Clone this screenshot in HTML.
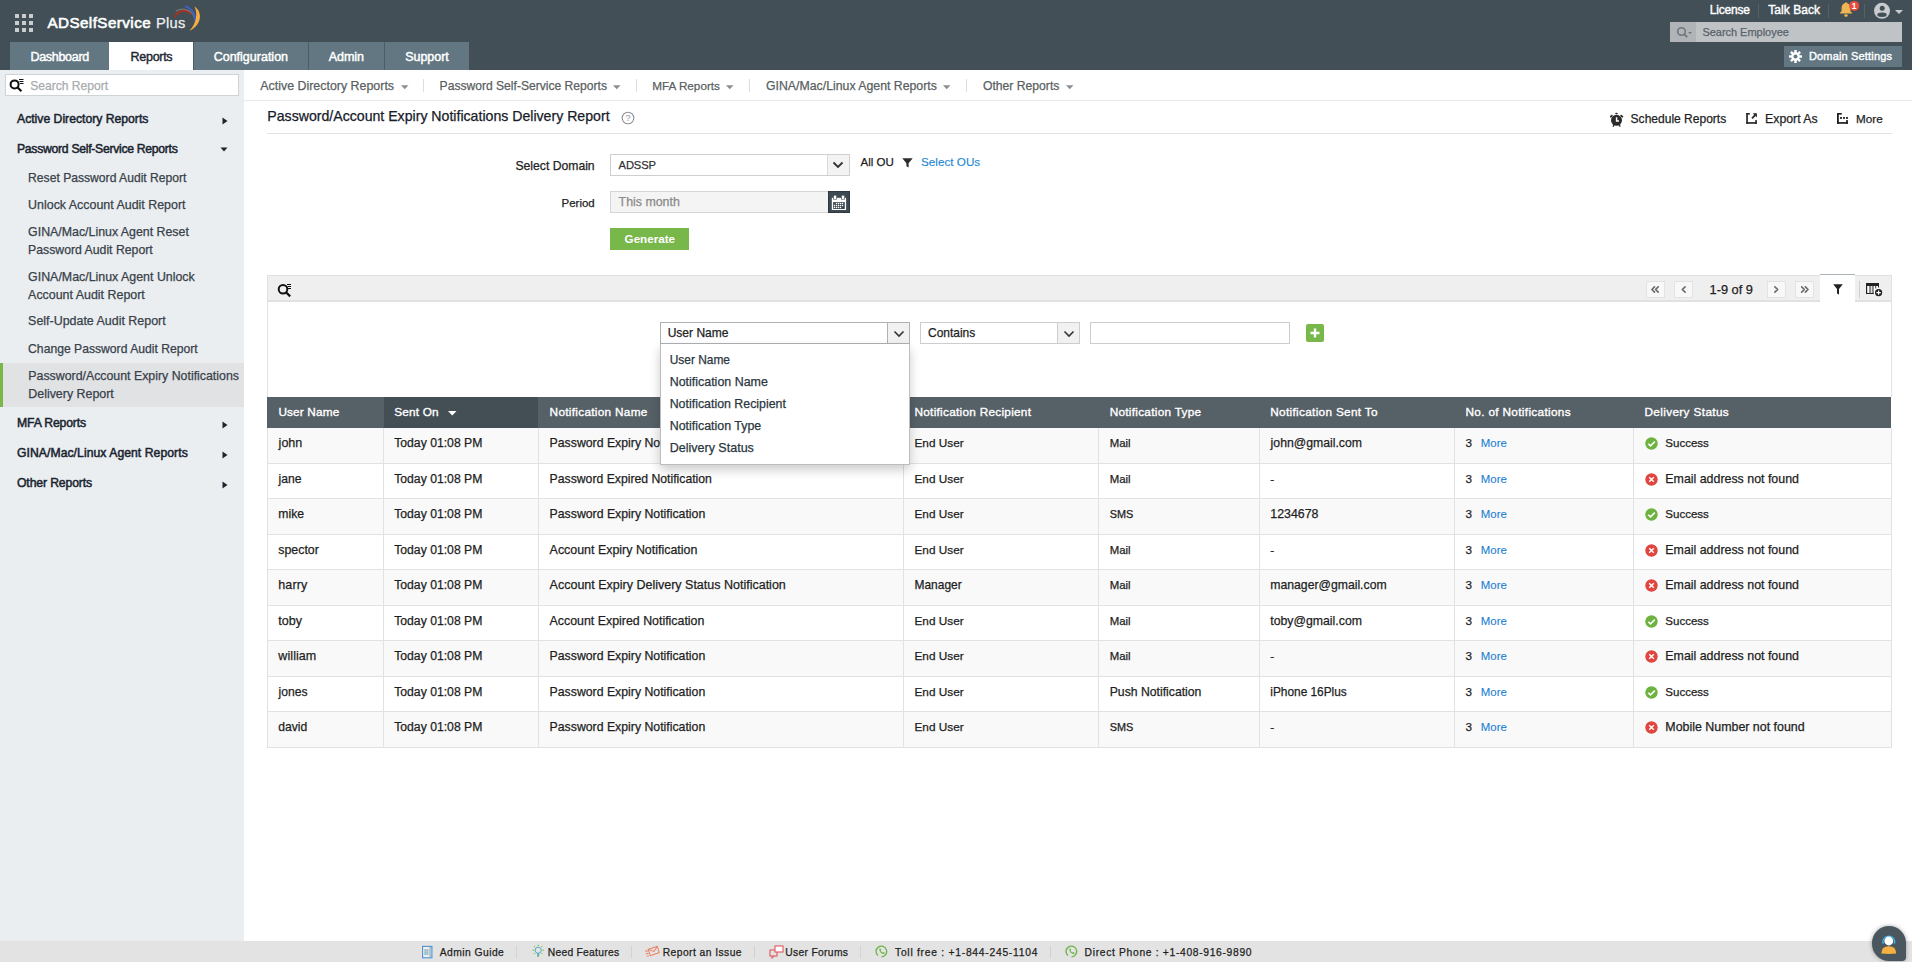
<!DOCTYPE html>
<html><head><meta charset="utf-8"><title>ADSelfService Plus</title>
<style>
html,body{margin:0;padding:0;}
body{width:1912px;height:962px;overflow:hidden;position:relative;background:#fff;font-family:"Liberation Sans",sans-serif;}
.t{position:absolute;white-space:nowrap;-webkit-text-stroke:0.25px currentColor;}
.t.b{-webkit-text-stroke:0;}
.r{position:absolute;}
</style></head><body>
<div class="r" style="left:0px;top:0px;width:1912px;height:70px;background:#424f57;"></div>
<div class="r" style="left:15px;top:14px;width:4px;height:4px;background:#c9cdd0;"></div>
<div class="r" style="left:15px;top:21px;width:4px;height:4px;background:#c9cdd0;"></div>
<div class="r" style="left:15px;top:28px;width:4px;height:4px;background:#c9cdd0;"></div>
<div class="r" style="left:22px;top:14px;width:4px;height:4px;background:#c9cdd0;"></div>
<div class="r" style="left:22px;top:21px;width:4px;height:4px;background:#c9cdd0;"></div>
<div class="r" style="left:22px;top:28px;width:4px;height:4px;background:#c9cdd0;"></div>
<div class="r" style="left:29px;top:14px;width:4px;height:4px;background:#c9cdd0;"></div>
<div class="r" style="left:29px;top:21px;width:4px;height:4px;background:#c9cdd0;"></div>
<div class="r" style="left:29px;top:28px;width:4px;height:4px;background:#c9cdd0;"></div>
<div class="t" style="left:47.40px;top:15.01px;font-size:15.20px;line-height:15.20px;color:#ffffff;letter-spacing:0.445px;-webkit-text-stroke:0.6px #fff;">ADSelfService</div>
<div class="t" style="left:155.90px;top:16.02px;font-size:14.60px;line-height:14.60px;color:#f0f0f0;letter-spacing:0.334px;">Plus</div>
<svg class="r" style="left:168px;top:0px" width="40" height="36" viewBox="0 0 40 36"><path d="M6.8 17.5 A9.6 9.6 0 0 1 23.2 14.2" stroke="#a8321e" stroke-width="2" fill="none"/><path d="M8 11.2 A12.5 12.5 0 0 1 26.6 17.8" stroke="#70777a" stroke-width="1.2" fill="none"/><path d="M17.2 6.2 A14.5 14.5 0 0 1 27.2 21.5" stroke="#3b62c9" stroke-width="1.9" fill="none"/><path d="M26.4 6.4 C34.6 11.5 34.4 24.5 21.4 30.8 C28.8 23.5 29.8 12.5 26.4 6.4 Z" fill="#f7ae3e"/></svg>
<div class="r" style="left:10px;top:42px;width:99px;height:28px;background:#627782;"></div>
<div class="t" style="left:30.50px;top:51.01px;font-size:12.50px;line-height:12.50px;color:#ffffff;letter-spacing:-0.303px;-webkit-text-stroke:0.45px #fff;">Dashboard</div>
<div class="r" style="left:109px;top:42px;width:84px;height:28px;background:#ffffff;"></div>
<div class="t" style="left:130.60px;top:51.01px;font-size:12.50px;line-height:12.50px;color:#1b2631;letter-spacing:-0.292px;-webkit-text-stroke:0.4px #1b2631;">Reports</div>
<div class="r" style="left:194px;top:42px;width:114px;height:28px;background:#627782;"></div>
<div class="t" style="left:213.70px;top:51.01px;font-size:12.50px;line-height:12.50px;color:#ffffff;-webkit-text-stroke:0.45px #fff;">Configuration</div>
<div class="r" style="left:309px;top:42px;width:75px;height:28px;background:#627782;"></div>
<div class="t" style="left:328.80px;top:51.01px;font-size:12.50px;line-height:12.50px;color:#ffffff;letter-spacing:-0.084px;-webkit-text-stroke:0.45px #fff;">Admin</div>
<div class="r" style="left:385px;top:42px;width:84px;height:28px;background:#627782;"></div>
<div class="t" style="left:405.20px;top:51.01px;font-size:12.50px;line-height:12.50px;color:#ffffff;letter-spacing:-0.035px;-webkit-text-stroke:0.45px #fff;">Support</div>
<div class="r" style="left:193px;top:42px;width:1px;height:28px;background:#4d5c65;"></div>
<div class="r" style="left:308px;top:42px;width:1px;height:28px;background:#4d5c65;"></div>
<div class="r" style="left:384px;top:42px;width:1px;height:28px;background:#4d5c65;"></div>
<div class="t" style="left:1709.70px;top:4.01px;font-size:12.00px;line-height:12.00px;color:#ffffff;letter-spacing:-0.173px;-webkit-text-stroke:0.4px #fff;">License</div>
<div class="r" style="left:1758px;top:4px;width:1px;height:14px;background:#55626a;"></div>
<div class="t" style="left:1768.30px;top:4.01px;font-size:12.00px;line-height:12.00px;color:#ffffff;letter-spacing:0.047px;-webkit-text-stroke:0.4px #fff;">Talk Back</div>
<div class="r" style="left:1828px;top:4px;width:1px;height:14px;background:#55626a;"></div>
<svg class="r" style="left:1838px;top:1px" width="16" height="17" viewBox="0 0 16 17"><path d="M8 1.2c-0.6 0-1 0.4-1 0.8C4.9 2.6 3.6 4.5 3.6 6.8v3.3L1.6 12.6h12.8l-2-2.5V6.8C12.4 4.5 11.1 2.6 9 2c0-0.4-0.4-0.8-1-0.8z" fill="#efb552"/><rect x="6.3" y="13.3" width="3.4" height="2.4" rx="1.2" fill="#efb552"/></svg>
<svg class="r" style="left:1847px;top:0px" width="14" height="12" viewBox="0 0 14 12"><circle cx="7.2" cy="5.9" r="5" fill="#e84c3d"/><text x="7.2" y="9.1" font-family="Liberation Sans" font-weight="bold" font-size="8.5" fill="#fff" text-anchor="middle">1</text></svg>
<div class="r" style="left:1864px;top:4px;width:1px;height:14px;background:#55626a;"></div>
<svg class="r" style="left:1873px;top:2px" width="18" height="18" viewBox="0 0 18 18"><circle cx="9" cy="8.85" r="8" fill="#c8ccce"/><circle cx="9.2" cy="6.2" r="2.5" fill="#424f57"/><ellipse cx="9" cy="12.7" rx="4.7" ry="2.2" fill="#424f57"/></svg>
<svg class="r" style="left:1895px;top:10px" width="8" height="4" viewBox="0 0 8 4"><path d="M0 0h8L4 4z" fill="#c8ccce"/></svg>
<div class="r" style="left:1670px;top:22px;width:232px;height:20px;background:#bfc3c6;"></div>
<div class="r" style="left:1670px;top:22px;width:26px;height:20px;background:#b0b4b7;"></div>
<svg class="r" style="left:1676px;top:26px" width="16" height="13" viewBox="0 0 16 13"><circle cx="5.5" cy="5.5" r="3.8" fill="none" stroke="#6e767c" stroke-width="1.6"/><path d="M8.2 8.2l3 3" stroke="#6e767c" stroke-width="1.8"/><path d="M12 6h4l-2 2z" fill="#6e767c"/></svg>
<div class="t" style="left:1702.40px;top:27.00px;font-size:11.00px;line-height:11.00px;color:#58626a;letter-spacing:-0.025px;">Search Employee</div>
<div class="r" style="left:1784px;top:46px;width:118px;height:21px;background:#627782;"></div>
<svg class="r" style="left:1789px;top:50px" width="13" height="13" viewBox="0 0 13 13"><g fill="#fff"><circle cx="6.5" cy="6.5" r="4.2"/><rect x="5.3" y="0" width="2.4" height="13"/><rect x="0" y="5.3" width="13" height="2.4"/><rect x="5.3" y="0" width="2.4" height="13" transform="rotate(45 6.5 6.5)"/><rect x="5.3" y="0" width="2.4" height="13" transform="rotate(-45 6.5 6.5)"/></g><circle cx="6.5" cy="6.5" r="2" fill="#627782"/></svg>
<div class="t" style="left:1808.90px;top:51.00px;font-size:11.00px;line-height:11.00px;color:#ffffff;letter-spacing:0.172px;-webkit-text-stroke:0.4px #fff;">Domain Settings</div>
<div class="r" style="left:0px;top:70px;width:244px;height:871px;background:#eaeef0;"></div>
<div class="r" style="left:5px;top:74px;width:234px;height:22px;background:#ffffff;box-sizing:border-box;border:1px solid #cfd3d6;"></div>
<svg class="r" style="left:9px;top:78px" width="15" height="14" viewBox="0 0 15 14"><circle cx="5.6" cy="6.4" r="4" fill="none" stroke="#111" stroke-width="2"/><path d="M8.4 9.2l4 4" stroke="#111" stroke-width="2.2"/><path d="M10 1.5h4.5M10.5 3.5h4M11 5.5h3.5" stroke="#111" stroke-width="1"/></svg>
<div class="t" style="left:30.20px;top:80.01px;font-size:12.08px;line-height:12.08px;color:#a9acae;">Search Report</div>
<div class="t" style="left:17.00px;top:113.02px;font-size:12.20px;line-height:12.20px;color:#1a2430;-webkit-text-stroke:0.5px #1a2430;">Active Directory Reports</div>
<svg class="r" style="left:222px;top:117px" width="6" height="8" viewBox="0 0 6 8"><path d="M0.5 0.5L5.5 4L0.5 7.5z" fill="#1b2530"/></svg>
<div class="t" style="left:17.00px;top:143.02px;font-size:12.20px;line-height:12.20px;color:#1a2430;letter-spacing:-0.280px;-webkit-text-stroke:0.5px #1a2430;">Password Self-Service Reports</div>
<svg class="r" style="left:220px;top:147px" width="8" height="5" viewBox="0 0 8 5"><path d="M0.5 0.5h7L4 4.5z" fill="#1b2530"/></svg>
<div class="r" style="left:0px;top:363px;width:244px;height:44px;background:#e0e2e4;"></div>
<div class="r" style="left:0px;top:363px;width:3px;height:44px;background:#7ab648;"></div>
<div class="t" style="left:28.10px;top:172.00px;font-size:12.14px;line-height:12.14px;color:#38414a;">Reset Password Audit Report</div>
<div class="t" style="left:28.10px;top:199.01px;font-size:12.43px;line-height:12.43px;color:#38414a;">Unlock Account Audit Report</div>
<div class="t" style="left:28.10px;top:226.00px;font-size:12.37px;line-height:12.37px;color:#38414a;">GINA/Mac/Linux Agent Reset</div>
<div class="t" style="left:28.10px;top:244.00px;font-size:12.25px;line-height:12.25px;color:#38414a;">Password Audit Report</div>
<div class="t" style="left:28.10px;top:271.01px;font-size:12.40px;line-height:12.40px;color:#38414a;">GINA/Mac/Linux Agent Unlock</div>
<div class="t" style="left:28.10px;top:289.00px;font-size:12.43px;line-height:12.43px;color:#38414a;">Account Audit Report</div>
<div class="t" style="left:28.10px;top:315.00px;font-size:12.45px;line-height:12.45px;color:#38414a;">Self-Update Audit Report</div>
<div class="t" style="left:28.10px;top:343.01px;font-size:12.17px;line-height:12.17px;color:#38414a;">Change Password Audit Report</div>
<div class="t" style="left:28.30px;top:370.01px;font-size:12.35px;line-height:12.35px;color:#38414a;">Password/Account Expiry Notifications</div>
<div class="t" style="left:28.30px;top:388.00px;font-size:12.41px;line-height:12.41px;color:#38414a;">Delivery Report</div>
<div class="t" style="left:17.00px;top:417.02px;font-size:12.20px;line-height:12.20px;color:#1a2430;letter-spacing:-0.132px;-webkit-text-stroke:0.5px #1a2430;">MFA Reports</div>
<svg class="r" style="left:222px;top:421px" width="6" height="8" viewBox="0 0 6 8"><path d="M0.5 0.5L5.5 4L0.5 7.5z" fill="#1b2530"/></svg>
<div class="t" style="left:17.00px;top:447.01px;font-size:12.20px;line-height:12.20px;color:#1a2430;letter-spacing:0.051px;-webkit-text-stroke:0.5px #1a2430;">GINA/Mac/Linux Agent Reports</div>
<svg class="r" style="left:222px;top:451px" width="6" height="8" viewBox="0 0 6 8"><path d="M0.5 0.5L5.5 4L0.5 7.5z" fill="#1b2530"/></svg>
<div class="t" style="left:17.00px;top:477.01px;font-size:12.20px;line-height:12.20px;color:#1a2430;letter-spacing:-0.118px;-webkit-text-stroke:0.5px #1a2430;">Other Reports</div>
<svg class="r" style="left:222px;top:481px" width="6" height="8" viewBox="0 0 6 8"><path d="M0.5 0.5L5.5 4L0.5 7.5z" fill="#1b2530"/></svg>
<div class="r" style="left:244px;top:100px;width:1668px;height:1px;background:#e6e8ea;"></div>
<div class="t" style="left:260.30px;top:80.00px;font-size:12.42px;line-height:12.42px;color:#5a5f63;">Active Directory Reports</div>
<svg class="r" style="left:401px;top:85px" width="8" height="5" viewBox="0 0 8 5"><path d="M0 0.3h7.5L3.75 4.3z" fill="#8a8f93"/></svg>
<div class="r" style="left:423px;top:79px;width:1px;height:13px;background:#dcdfe1;"></div>
<div class="t" style="left:439.60px;top:80.01px;font-size:12.10px;line-height:12.10px;color:#5a5f63;">Password Self-Service Reports</div>
<svg class="r" style="left:613px;top:85px" width="8" height="5" viewBox="0 0 8 5"><path d="M0 0.3h7.5L3.75 4.3z" fill="#8a8f93"/></svg>
<div class="r" style="left:636px;top:79px;width:1px;height:13px;background:#dcdfe1;"></div>
<div class="t" style="left:652.20px;top:80.01px;font-size:11.73px;line-height:11.73px;color:#5a5f63;">MFA Reports</div>
<svg class="r" style="left:726px;top:85px" width="8" height="5" viewBox="0 0 8 5"><path d="M0 0.3h7.5L3.75 4.3z" fill="#8a8f93"/></svg>
<div class="r" style="left:749px;top:79px;width:1px;height:13px;background:#dcdfe1;"></div>
<div class="t" style="left:766.00px;top:80.01px;font-size:12.31px;line-height:12.31px;color:#5a5f63;">GINA/Mac/Linux Agent Reports</div>
<svg class="r" style="left:943px;top:85px" width="8" height="5" viewBox="0 0 8 5"><path d="M0 0.3h7.5L3.75 4.3z" fill="#8a8f93"/></svg>
<div class="r" style="left:966px;top:79px;width:1px;height:13px;background:#dcdfe1;"></div>
<div class="t" style="left:983.00px;top:80.00px;font-size:12.17px;line-height:12.17px;color:#5a5f63;">Other Reports</div>
<svg class="r" style="left:1066px;top:85px" width="8" height="5" viewBox="0 0 8 5"><path d="M0 0.3h7.5L3.75 4.3z" fill="#8a8f93"/></svg>
<div class="t" style="left:267.30px;top:109.02px;font-size:14.14px;line-height:14.14px;color:#17202a;">Password/Account Expiry Notifications Delivery Report</div>
<svg class="r" style="left:621px;top:111px" width="14" height="14" viewBox="0 0 14 14"><circle cx="7" cy="7" r="5.8" fill="none" stroke="#8d9196" stroke-width="1.1"/><text x="7" y="10.3" font-family="Liberation Sans" font-size="9" fill="#8d9196" text-anchor="middle">?</text></svg>
<div class="r" style="left:267px;top:133px;width:1625px;height:1px;background:#e3e3e3;"></div>
<svg class="r" style="left:1604px;top:108px" width="26" height="22" viewBox="0 0 26 22"><g fill="#2d2a2b"><circle cx="12.5" cy="12.3" r="5.5"/><ellipse cx="12.5" cy="5.5" rx="1.4" ry="0.8"/><ellipse cx="7.3" cy="8.2" rx="1.7" ry="1" transform="rotate(-40 7.3 8.2)"/><ellipse cx="17.8" cy="8.2" rx="1.7" ry="1" transform="rotate(40 17.8 8.2)"/></g><path d="M9.9 16.8L9.1 18.8M15.2 16.8L16.2 18.6" stroke="#2d2a2b" stroke-width="1.3"/><path d="M12.6 9.2V13H15" stroke="#fff" stroke-width="1.5" fill="none"/></svg>
<div class="t" style="left:1630.60px;top:113.00px;font-size:12.04px;line-height:12.04px;color:#1f1f1f;">Schedule Reports</div>
<svg class="r" style="left:1746px;top:113px" width="11" height="11" viewBox="0 0 11 11"><g fill="#2a2a2a"><rect x="0.2" y="0" width="1.7" height="10.8"/><rect x="0.2" y="0" width="3.6" height="1.6"/><rect x="0.2" y="9.1" width="10.7" height="1.7"/><rect x="9.2" y="7.1" width="1.7" height="3.7"/><path d="M6.6 0.3H10.9V4.6Z"/></g><path d="M9.8 1.4L6 5.3" stroke="#2a2a2a" stroke-width="1.8"/></svg>
<div class="t" style="left:1765.10px;top:113.01px;font-size:12.31px;line-height:12.31px;color:#1f1f1f;">Export As</div>
<svg class="r" style="left:1837px;top:113px" width="11" height="11" viewBox="0 0 11 11"><g fill="#1e1e1e"><rect x="0" y="0" width="1.8" height="10.8"/><rect x="0" y="0" width="4.8" height="1.6"/><rect x="0" y="9.1" width="10.9" height="1.7"/><rect x="9.1" y="7.1" width="1.8" height="3.7"/><rect x="3.1" y="4" width="1.8" height="1.9"/><rect x="6.1" y="4" width="1.8" height="1.9"/><rect x="9.1" y="4" width="1.8" height="1.9"/></g></svg>
<div class="t" style="left:1856.10px;top:113.00px;font-size:11.71px;line-height:11.71px;color:#1f1f1f;">More</div>
<div class="t" style="left:515.40px;top:160.01px;font-size:12.19px;line-height:12.19px;color:#222;">Select Domain</div>
<div class="r" style="left:610px;top:154px;width:240px;height:22px;background:#fff;box-sizing:border-box;border:1px solid #cfcfcf;"></div>
<div class="r" style="left:827px;top:155px;width:22px;height:20px;background:#f3f3f3;box-sizing:border-box;border-left:1px solid #d9d9d9;"></div>
<svg class="r" style="left:832px;top:161px" width="12" height="8" viewBox="0 0 12 8"><path d="M1.5 1.5L6 6L10.5 1.5" stroke="#333" stroke-width="1.8" fill="none"/></svg>
<div class="t" style="left:618.60px;top:160.01px;font-size:11.16px;line-height:11.16px;color:#333;letter-spacing:-0.133px;">ADSSP</div>
<div class="t" style="left:860.60px;top:157.01px;font-size:11.52px;line-height:11.52px;color:#222;">All OU</div>
<svg class="r" style="left:902px;top:158px" width="11" height="10" viewBox="0 0 11 10"><path d="M0.3 0.3h10.4L6.6 5.2V9.6L4.4 8.2V5.2z" fill="#2d2d2d"/></svg>
<div class="t" style="left:921.00px;top:156.00px;font-size:11.71px;line-height:11.71px;color:#1a86d4;-webkit-text-stroke:0.1px #1a86d4;">Select OUs</div>
<div class="t" style="left:561.60px;top:198.01px;font-size:11.45px;line-height:11.45px;color:#222;">Period</div>
<div class="r" style="left:610px;top:191px;width:240px;height:22px;background:#f4f4f4;box-sizing:border-box;border:1px solid #d5d5d5;"></div>
<div class="r" style="left:828px;top:191px;width:22px;height:22px;background:#3e4a52;box-sizing:border-box;border:1px solid #2f3a40;"></div>
<svg class="r" style="left:828px;top:191px" width="22" height="22" viewBox="0 0 22 22"><rect x="3.8" y="6.8" width="14.3" height="12.2" fill="#fff"/><rect x="5.1" y="3.9" width="3.8" height="4.6" fill="#3e4a52"/><rect x="13.1" y="3.9" width="3.8" height="4.6" fill="#3e4a52"/><rect x="5.8" y="4.6" width="2.5" height="3.4" fill="#fff"/><rect x="13.8" y="4.6" width="2.5" height="3.4" fill="#fff"/><rect x="5.1" y="11.1" width="11.7" height="6.9" fill="#3e4a52"/><g fill="#fff"><rect x="7.85" y="11.85" width="1.3" height="1.3"/><rect x="9.85" y="11.85" width="1.3" height="1.3"/><rect x="11.85" y="11.85" width="1.3" height="1.3"/><rect x="13.85" y="11.85" width="1.3" height="1.3"/><rect x="5.85" y="13.85" width="1.3" height="1.3"/><rect x="7.85" y="13.85" width="1.3" height="1.3"/><rect x="9.85" y="13.85" width="1.3" height="1.3"/><rect x="11.85" y="13.85" width="1.3" height="1.3"/><rect x="13.85" y="13.85" width="1.3" height="1.3"/><rect x="5.85" y="15.85" width="1.3" height="1.3"/><rect x="7.85" y="15.85" width="1.3" height="1.3"/><rect x="9.85" y="15.85" width="1.3" height="1.3"/><rect x="11.85" y="15.85" width="1.3" height="1.3"/></g></svg>
<div class="t" style="left:618.60px;top:196.01px;font-size:12.38px;line-height:12.38px;color:#8a8a8a;">This month</div>
<div class="r" style="left:610px;top:228px;width:79px;height:22px;background:#78b749;"></div>
<div class="t b" style="left:624.60px;top:233.01px;font-size:11.65px;line-height:11.65px;color:#ffffff;font-weight:bold;">Generate</div>
<div class="r" style="left:267px;top:275px;width:1625px;height:27px;background:#efefef;box-sizing:border-box;border:1px solid #e1e1e1;border-bottom:2px solid #e1e1e1;"></div>
<svg class="r" style="left:277px;top:283px" width="15" height="15" viewBox="0 0 15 15"><circle cx="6" cy="6.2" r="4.3" fill="none" stroke="#111" stroke-width="2"/><path d="M9 9.2l4.2 4.2" stroke="#111" stroke-width="2.2"/><path d="M10 1.5h4M10.5 3.5h3.5M11 5.5h3" stroke="#111" stroke-width="1"/></svg>
<div class="r" style="left:1646px;top:281px;width:19px;height:17px;background:#f8f8f8;box-sizing:border-box;border:1px solid #e2e4e4;"></div>
<div class="r" style="left:1674px;top:281px;width:19px;height:17px;background:#f8f8f8;box-sizing:border-box;border:1px solid #e2e4e4;"></div>
<div class="r" style="left:1767px;top:281px;width:19px;height:17px;background:#f8f8f8;box-sizing:border-box;border:1px solid #e2e4e4;"></div>
<div class="r" style="left:1795px;top:281px;width:19px;height:17px;background:#f8f8f8;box-sizing:border-box;border:1px solid #e2e4e4;"></div>
<svg class="r" style="left:1640px;top:280px" width="180" height="20" viewBox="0 0 180 20"><g stroke="#6b6b6b" stroke-width="1.7" fill="none" stroke-linecap="round" stroke-linejoin="round"><path d="M14.5 6.9L11.9 9.5L14.5 12.1M18.2 6.9L15.6 9.5L18.2 12.1"/><path d="M45.1 6.9L42.3 9.5L45.1 12.1"/><path d="M134.9 6.9L137.7 9.5L134.9 12.1"/><path d="M165.4 6.9L168 9.5L165.4 12.1M161.7 6.9L164.3 9.5L161.7 12.1"/></g></svg>
<div class="t" style="left:1709.60px;top:284.00px;font-size:12.77px;line-height:12.77px;color:#222;">1-9 of 9</div>
<div class="r" style="left:1820px;top:274px;width:35px;height:28px;background:#ffffff;border-top:1px solid #a9b2b7;box-sizing:border-box;"></div>
<svg class="r" style="left:1833px;top:284px" width="10" height="11" viewBox="0 0 10 11"><path d="M0.2 0.3h9.6L6 5v5.6L4 9.5V5z" fill="#222"/></svg>
<div class="r" style="left:1859px;top:281px;width:1px;height:17px;background:#cfcfcf;"></div>
<svg class="r" style="left:1860px;top:276px" width="32" height="26" viewBox="0 0 32 26"><rect x="6" y="7" width="13" height="10.8" fill="#fff"/><rect x="10.5" y="9" width="2" height="8" fill="#dcdcdc"/><g fill="#222"><rect x="6" y="7" width="13" height="3"/><rect x="6" y="7" width="1.2" height="11"/><rect x="9.5" y="7" width="1" height="11"/><rect x="12.5" y="7" width="1" height="11"/><rect x="15.3" y="7" width="0.9" height="5.5"/><rect x="18" y="7" width="1" height="4.5"/><rect x="6" y="17" width="7.8" height="1"/></g><circle cx="18.6" cy="16.6" r="3.6" fill="#222"/><path d="M18.6 14.4v4.4M16.4 16.6h4.4" stroke="#fff" stroke-width="1.2"/></svg>
<div class="r" style="left:267px;top:302px;width:1px;height:95px;background:#e1e1e1;"></div>
<div class="r" style="left:1891px;top:302px;width:1px;height:95px;background:#e1e1e1;"></div>
<div class="r" style="left:660px;top:322px;width:250px;height:22px;background:#fff;box-sizing:border-box;border:1px solid #aeb0b2;"></div>
<div class="r" style="left:887px;top:323px;width:22px;height:20px;background:#f1f1f1;box-sizing:border-box;border-left:1px solid #aeb0b2;"></div>
<svg class="r" style="left:893px;top:330px" width="12" height="8" viewBox="0 0 12 8"><path d="M1.5 1.5L6 6L10.5 1.5" stroke="#333" stroke-width="1.6" fill="none"/></svg>
<div class="t" style="left:667.70px;top:327.00px;font-size:12.03px;line-height:12.03px;color:#222;">User Name</div>
<div class="r" style="left:920px;top:322px;width:160px;height:22px;background:#fff;box-sizing:border-box;border:1px solid #cbcdce;"></div>
<div class="r" style="left:1057px;top:323px;width:22px;height:20px;background:#f1f1f1;box-sizing:border-box;border-left:1px solid #cbcdce;"></div>
<svg class="r" style="left:1063px;top:330px" width="12" height="8" viewBox="0 0 12 8"><path d="M1.5 1.5L6 6L10.5 1.5" stroke="#333" stroke-width="1.6" fill="none"/></svg>
<div class="t" style="left:928.00px;top:328.01px;font-size:11.96px;line-height:11.96px;color:#222;">Contains</div>
<div class="r" style="left:1090px;top:322px;width:200px;height:22px;background:#fff;box-sizing:border-box;border:1px solid #cbcdce;"></div>
<div class="r" style="left:1306px;top:324px;width:18px;height:18px;background:#78b749;border-radius:2px;"></div>
<svg class="r" style="left:1309px;top:327px" width="12" height="12" viewBox="0 0 12 12"><path d="M6 1.5v9M1.5 6h9" stroke="#fff" stroke-width="2.4"/></svg>
<div class="r" style="left:267px;top:397px;width:1624px;height:31px;background:#566067;"></div>
<div class="r" style="left:384px;top:397px;width:154px;height:31px;background:#434e55;"></div>
<div class="t" style="left:278.40px;top:407.01px;font-size:11.80px;line-height:11.80px;color:#ffffff;letter-spacing:0.144px;-webkit-text-stroke:0.35px #fff;">User Name</div>
<div class="t" style="left:394.20px;top:407.01px;font-size:11.80px;line-height:11.80px;color:#ffffff;letter-spacing:0.182px;-webkit-text-stroke:0.35px #fff;">Sent On</div>
<div class="t" style="left:549.60px;top:407.01px;font-size:11.80px;line-height:11.80px;color:#ffffff;letter-spacing:0.294px;-webkit-text-stroke:0.35px #fff;">Notification Name</div>
<div class="t" style="left:914.50px;top:407.01px;font-size:11.80px;line-height:11.80px;color:#ffffff;letter-spacing:0.269px;-webkit-text-stroke:0.35px #fff;">Notification Recipient</div>
<div class="t" style="left:1109.70px;top:407.01px;font-size:11.80px;line-height:11.80px;color:#ffffff;letter-spacing:0.273px;-webkit-text-stroke:0.35px #fff;">Notification Type</div>
<div class="t" style="left:1270.30px;top:407.01px;font-size:11.80px;line-height:11.80px;color:#ffffff;letter-spacing:0.306px;-webkit-text-stroke:0.35px #fff;">Notification Sent To</div>
<div class="t" style="left:1465.50px;top:407.01px;font-size:11.80px;line-height:11.80px;color:#ffffff;letter-spacing:0.323px;-webkit-text-stroke:0.35px #fff;">No. of Notifications</div>
<div class="t" style="left:1644.40px;top:407.01px;font-size:11.80px;line-height:11.80px;color:#ffffff;letter-spacing:0.360px;-webkit-text-stroke:0.35px #fff;">Delivery Status</div>
<svg class="r" style="left:448px;top:411px" width="9" height="5" viewBox="0 0 9 5"><path d="M0 0h8.5L4.25 4.5z" fill="#fff"/></svg>
<div class="r" style="left:267px;top:428px;width:1624px;height:35px;background:#f9f9f9;"></div>
<div class="t" style="left:278.61px;top:437.01px;font-size:12.52px;line-height:12.52px;color:#1e1e1e;">john</div>
<div class="t" style="left:394.20px;top:437.01px;font-size:12.21px;line-height:12.21px;color:#1e1e1e;">Today 01:08 PM</div>
<div class="t" style="left:549.60px;top:437.00px;font-size:12.29px;line-height:12.29px;color:#1e1e1e;">Password Expiry Notification</div>
<div class="t" style="left:914.50px;top:438.01px;font-size:11.80px;line-height:11.80px;color:#1e1e1e;">End User</div>
<div class="t" style="left:1109.70px;top:438.00px;font-size:11.39px;line-height:11.39px;color:#1e1e1e;">Mail</div>
<div class="t" style="left:1270.61px;top:437.01px;font-size:12.24px;line-height:12.24px;color:#1e1e1e;">john@gmail.com</div>
<div class="t" style="left:1465.50px;top:437.00px;font-size:11.70px;line-height:11.70px;color:#1e1e1e;">3</div>
<div class="t" style="left:1480.80px;top:438.01px;font-size:11.45px;line-height:11.45px;color:#1a80d2;-webkit-text-stroke:0.1px #1a80d2;">More</div>
<svg class="r" style="left:1645px;top:437px" width="13" height="13" viewBox="0 0 13 13"><circle cx="6.5" cy="6.5" r="6.2" fill="#6db33f"/><path d="M3.3 6.7l2.2 2.2L9.8 4.6" stroke="#fff" stroke-width="1.6" fill="none"/></svg>
<div class="t" style="left:1665.30px;top:438.00px;font-size:11.53px;line-height:11.53px;color:#1e1e1e;">Success</div>
<div class="r" style="left:267px;top:463px;width:1624px;height:35px;background:#ffffff;"></div>
<div class="t" style="left:278.60px;top:473.01px;font-size:12.17px;line-height:12.17px;color:#1e1e1e;">jane</div>
<div class="t" style="left:394.20px;top:473.01px;font-size:12.21px;line-height:12.21px;color:#1e1e1e;">Today 01:08 PM</div>
<div class="t" style="left:549.60px;top:473.01px;font-size:12.22px;line-height:12.22px;color:#1e1e1e;">Password Expired Notification</div>
<div class="t" style="left:914.50px;top:474.01px;font-size:11.80px;line-height:11.80px;color:#1e1e1e;">End User</div>
<div class="t" style="left:1109.70px;top:474.00px;font-size:11.39px;line-height:11.39px;color:#1e1e1e;">Mail</div>
<div class="t" style="left:1270.30px;top:473.00px;font-size:11.70px;line-height:11.70px;color:#1e1e1e;">-</div>
<div class="t" style="left:1465.50px;top:473.00px;font-size:11.70px;line-height:11.70px;color:#1e1e1e;">3</div>
<div class="t" style="left:1480.80px;top:474.01px;font-size:11.45px;line-height:11.45px;color:#1a80d2;-webkit-text-stroke:0.1px #1a80d2;">More</div>
<svg class="r" style="left:1645px;top:473px" width="13" height="13" viewBox="0 0 13 13"><circle cx="6.5" cy="6.5" r="6.2" fill="#e0463f"/><path d="M4.2 4.2l4.6 4.6M8.8 4.2l-4.6 4.6" stroke="#fff" stroke-width="1.4"/></svg>
<div class="t" style="left:1665.30px;top:473.01px;font-size:12.40px;line-height:12.40px;color:#1e1e1e;">Email address not found</div>
<div class="r" style="left:267px;top:498px;width:1624px;height:36px;background:#f9f9f9;"></div>
<div class="t" style="left:278.30px;top:508.00px;font-size:12.18px;line-height:12.18px;color:#1e1e1e;">mike</div>
<div class="t" style="left:394.20px;top:508.01px;font-size:12.21px;line-height:12.21px;color:#1e1e1e;">Today 01:08 PM</div>
<div class="t" style="left:549.60px;top:508.00px;font-size:12.29px;line-height:12.29px;color:#1e1e1e;">Password Expiry Notification</div>
<div class="t" style="left:914.50px;top:509.01px;font-size:11.80px;line-height:11.80px;color:#1e1e1e;">End User</div>
<div class="t" style="left:1109.70px;top:509.01px;font-size:10.90px;line-height:10.90px;color:#1e1e1e;">SMS</div>
<div class="t" style="left:1270.30px;top:508.01px;font-size:12.37px;line-height:12.37px;color:#1e1e1e;">1234678</div>
<div class="t" style="left:1465.50px;top:508.00px;font-size:11.70px;line-height:11.70px;color:#1e1e1e;">3</div>
<div class="t" style="left:1480.80px;top:509.01px;font-size:11.45px;line-height:11.45px;color:#1a80d2;-webkit-text-stroke:0.1px #1a80d2;">More</div>
<svg class="r" style="left:1645px;top:508px" width="13" height="13" viewBox="0 0 13 13"><circle cx="6.5" cy="6.5" r="6.2" fill="#6db33f"/><path d="M3.3 6.7l2.2 2.2L9.8 4.6" stroke="#fff" stroke-width="1.6" fill="none"/></svg>
<div class="t" style="left:1665.30px;top:509.00px;font-size:11.53px;line-height:11.53px;color:#1e1e1e;">Success</div>
<div class="r" style="left:267px;top:534px;width:1624px;height:35px;background:#ffffff;"></div>
<div class="t" style="left:278.30px;top:544.01px;font-size:12.38px;line-height:12.38px;color:#1e1e1e;">spector</div>
<div class="t" style="left:394.20px;top:544.01px;font-size:12.21px;line-height:12.21px;color:#1e1e1e;">Today 01:08 PM</div>
<div class="t" style="left:549.60px;top:544.01px;font-size:12.43px;line-height:12.43px;color:#1e1e1e;">Account Expiry Notification</div>
<div class="t" style="left:914.50px;top:545.01px;font-size:11.80px;line-height:11.80px;color:#1e1e1e;">End User</div>
<div class="t" style="left:1109.70px;top:545.00px;font-size:11.39px;line-height:11.39px;color:#1e1e1e;">Mail</div>
<div class="t" style="left:1270.30px;top:544.00px;font-size:11.70px;line-height:11.70px;color:#1e1e1e;">-</div>
<div class="t" style="left:1465.50px;top:544.00px;font-size:11.70px;line-height:11.70px;color:#1e1e1e;">3</div>
<div class="t" style="left:1480.80px;top:545.01px;font-size:11.45px;line-height:11.45px;color:#1a80d2;-webkit-text-stroke:0.1px #1a80d2;">More</div>
<svg class="r" style="left:1645px;top:544px" width="13" height="13" viewBox="0 0 13 13"><circle cx="6.5" cy="6.5" r="6.2" fill="#e0463f"/><path d="M4.2 4.2l4.6 4.6M8.8 4.2l-4.6 4.6" stroke="#fff" stroke-width="1.4"/></svg>
<div class="t" style="left:1665.30px;top:544.01px;font-size:12.40px;line-height:12.40px;color:#1e1e1e;">Email address not found</div>
<div class="r" style="left:267px;top:569px;width:1624px;height:36px;background:#f9f9f9;"></div>
<div class="t" style="left:278.30px;top:579.01px;font-size:12.52px;line-height:12.52px;color:#1e1e1e;letter-spacing:0.114px;">harry</div>
<div class="t" style="left:394.20px;top:579.01px;font-size:12.21px;line-height:12.21px;color:#1e1e1e;">Today 01:08 PM</div>
<div class="t" style="left:549.60px;top:579.01px;font-size:12.51px;line-height:12.51px;color:#1e1e1e;">Account Expiry Delivery Status Notification</div>
<div class="t" style="left:914.50px;top:580.01px;font-size:11.96px;line-height:11.96px;color:#1e1e1e;">Manager</div>
<div class="t" style="left:1109.70px;top:580.00px;font-size:11.39px;line-height:11.39px;color:#1e1e1e;">Mail</div>
<div class="t" style="left:1270.30px;top:579.01px;font-size:12.23px;line-height:12.23px;color:#1e1e1e;">manager@gmail.com</div>
<div class="t" style="left:1465.50px;top:579.00px;font-size:11.70px;line-height:11.70px;color:#1e1e1e;">3</div>
<div class="t" style="left:1480.80px;top:580.01px;font-size:11.45px;line-height:11.45px;color:#1a80d2;-webkit-text-stroke:0.1px #1a80d2;">More</div>
<svg class="r" style="left:1645px;top:579px" width="13" height="13" viewBox="0 0 13 13"><circle cx="6.5" cy="6.5" r="6.2" fill="#e0463f"/><path d="M4.2 4.2l4.6 4.6M8.8 4.2l-4.6 4.6" stroke="#fff" stroke-width="1.4"/></svg>
<div class="t" style="left:1665.30px;top:579.01px;font-size:12.40px;line-height:12.40px;color:#1e1e1e;">Email address not found</div>
<div class="r" style="left:267px;top:605px;width:1624px;height:35px;background:#ffffff;"></div>
<div class="t" style="left:278.30px;top:615.01px;font-size:12.52px;line-height:12.52px;color:#1e1e1e;">toby</div>
<div class="t" style="left:394.20px;top:615.01px;font-size:12.21px;line-height:12.21px;color:#1e1e1e;">Today 01:08 PM</div>
<div class="t" style="left:549.60px;top:615.01px;font-size:12.38px;line-height:12.38px;color:#1e1e1e;">Account Expired Notification</div>
<div class="t" style="left:914.50px;top:616.01px;font-size:11.80px;line-height:11.80px;color:#1e1e1e;">End User</div>
<div class="t" style="left:1109.70px;top:616.00px;font-size:11.39px;line-height:11.39px;color:#1e1e1e;">Mail</div>
<div class="t" style="left:1270.30px;top:615.02px;font-size:12.29px;line-height:12.29px;color:#1e1e1e;">toby@gmail.com</div>
<div class="t" style="left:1465.50px;top:615.00px;font-size:11.70px;line-height:11.70px;color:#1e1e1e;">3</div>
<div class="t" style="left:1480.80px;top:616.01px;font-size:11.45px;line-height:11.45px;color:#1a80d2;-webkit-text-stroke:0.1px #1a80d2;">More</div>
<svg class="r" style="left:1645px;top:615px" width="13" height="13" viewBox="0 0 13 13"><circle cx="6.5" cy="6.5" r="6.2" fill="#6db33f"/><path d="M3.3 6.7l2.2 2.2L9.8 4.6" stroke="#fff" stroke-width="1.6" fill="none"/></svg>
<div class="t" style="left:1665.30px;top:616.00px;font-size:11.53px;line-height:11.53px;color:#1e1e1e;">Success</div>
<div class="r" style="left:267px;top:640px;width:1624px;height:36px;background:#f9f9f9;"></div>
<div class="t" style="left:278.36px;top:650.01px;font-size:12.52px;line-height:12.52px;color:#1e1e1e;letter-spacing:0.063px;">william</div>
<div class="t" style="left:394.20px;top:650.01px;font-size:12.21px;line-height:12.21px;color:#1e1e1e;">Today 01:08 PM</div>
<div class="t" style="left:549.60px;top:650.00px;font-size:12.29px;line-height:12.29px;color:#1e1e1e;">Password Expiry Notification</div>
<div class="t" style="left:914.50px;top:651.01px;font-size:11.80px;line-height:11.80px;color:#1e1e1e;">End User</div>
<div class="t" style="left:1109.70px;top:651.00px;font-size:11.39px;line-height:11.39px;color:#1e1e1e;">Mail</div>
<div class="t" style="left:1270.30px;top:650.00px;font-size:11.70px;line-height:11.70px;color:#1e1e1e;">-</div>
<div class="t" style="left:1465.50px;top:650.00px;font-size:11.70px;line-height:11.70px;color:#1e1e1e;">3</div>
<div class="t" style="left:1480.80px;top:651.01px;font-size:11.45px;line-height:11.45px;color:#1a80d2;-webkit-text-stroke:0.1px #1a80d2;">More</div>
<svg class="r" style="left:1645px;top:650px" width="13" height="13" viewBox="0 0 13 13"><circle cx="6.5" cy="6.5" r="6.2" fill="#e0463f"/><path d="M4.2 4.2l4.6 4.6M8.8 4.2l-4.6 4.6" stroke="#fff" stroke-width="1.4"/></svg>
<div class="t" style="left:1665.30px;top:650.01px;font-size:12.40px;line-height:12.40px;color:#1e1e1e;">Email address not found</div>
<div class="r" style="left:267px;top:676px;width:1624px;height:35px;background:#ffffff;"></div>
<div class="t" style="left:278.60px;top:686.01px;font-size:12.13px;line-height:12.13px;color:#1e1e1e;">jones</div>
<div class="t" style="left:394.20px;top:686.01px;font-size:12.21px;line-height:12.21px;color:#1e1e1e;">Today 01:08 PM</div>
<div class="t" style="left:549.60px;top:686.00px;font-size:12.29px;line-height:12.29px;color:#1e1e1e;">Password Expiry Notification</div>
<div class="t" style="left:914.50px;top:687.01px;font-size:11.80px;line-height:11.80px;color:#1e1e1e;">End User</div>
<div class="t" style="left:1109.70px;top:686.00px;font-size:12.22px;line-height:12.22px;color:#1e1e1e;">Push Notification</div>
<div class="t" style="left:1270.30px;top:687.01px;font-size:11.86px;line-height:11.86px;color:#1e1e1e;">iPhone 16Plus</div>
<div class="t" style="left:1465.50px;top:686.00px;font-size:11.70px;line-height:11.70px;color:#1e1e1e;">3</div>
<div class="t" style="left:1480.80px;top:687.01px;font-size:11.45px;line-height:11.45px;color:#1a80d2;-webkit-text-stroke:0.1px #1a80d2;">More</div>
<svg class="r" style="left:1645px;top:686px" width="13" height="13" viewBox="0 0 13 13"><circle cx="6.5" cy="6.5" r="6.2" fill="#6db33f"/><path d="M3.3 6.7l2.2 2.2L9.8 4.6" stroke="#fff" stroke-width="1.6" fill="none"/></svg>
<div class="t" style="left:1665.30px;top:687.00px;font-size:11.53px;line-height:11.53px;color:#1e1e1e;">Success</div>
<div class="r" style="left:267px;top:711px;width:1624px;height:36px;background:#f9f9f9;"></div>
<div class="t" style="left:278.30px;top:721.01px;font-size:12.13px;line-height:12.13px;color:#1e1e1e;">david</div>
<div class="t" style="left:394.20px;top:721.01px;font-size:12.21px;line-height:12.21px;color:#1e1e1e;">Today 01:08 PM</div>
<div class="t" style="left:549.60px;top:721.00px;font-size:12.29px;line-height:12.29px;color:#1e1e1e;">Password Expiry Notification</div>
<div class="t" style="left:914.50px;top:722.01px;font-size:11.80px;line-height:11.80px;color:#1e1e1e;">End User</div>
<div class="t" style="left:1109.70px;top:722.01px;font-size:10.90px;line-height:10.90px;color:#1e1e1e;">SMS</div>
<div class="t" style="left:1270.30px;top:721.00px;font-size:11.70px;line-height:11.70px;color:#1e1e1e;">-</div>
<div class="t" style="left:1465.50px;top:721.00px;font-size:11.70px;line-height:11.70px;color:#1e1e1e;">3</div>
<div class="t" style="left:1480.80px;top:722.01px;font-size:11.45px;line-height:11.45px;color:#1a80d2;-webkit-text-stroke:0.1px #1a80d2;">More</div>
<svg class="r" style="left:1645px;top:721px" width="13" height="13" viewBox="0 0 13 13"><circle cx="6.5" cy="6.5" r="6.2" fill="#e0463f"/><path d="M4.2 4.2l4.6 4.6M8.8 4.2l-4.6 4.6" stroke="#fff" stroke-width="1.4"/></svg>
<div class="t" style="left:1665.30px;top:721.01px;font-size:12.41px;line-height:12.41px;color:#1e1e1e;">Mobile Number not found</div>
<div class="r" style="left:267px;top:463px;width:1624px;height:1px;background:#e2e2e2;"></div>
<div class="r" style="left:267px;top:498px;width:1624px;height:1px;background:#e2e2e2;"></div>
<div class="r" style="left:267px;top:534px;width:1624px;height:1px;background:#e2e2e2;"></div>
<div class="r" style="left:267px;top:569px;width:1624px;height:1px;background:#e2e2e2;"></div>
<div class="r" style="left:267px;top:605px;width:1624px;height:1px;background:#e2e2e2;"></div>
<div class="r" style="left:267px;top:640px;width:1624px;height:1px;background:#e2e2e2;"></div>
<div class="r" style="left:267px;top:676px;width:1624px;height:1px;background:#e2e2e2;"></div>
<div class="r" style="left:267px;top:711px;width:1624px;height:1px;background:#e2e2e2;"></div>
<div class="r" style="left:267px;top:747px;width:1624px;height:1px;background:#e2e2e2;"></div>
<div class="r" style="left:267px;top:428px;width:1px;height:320px;background:#e2e2e2;"></div>
<div class="r" style="left:383px;top:428px;width:1px;height:320px;background:#e2e2e2;"></div>
<div class="r" style="left:538px;top:428px;width:1px;height:320px;background:#e2e2e2;"></div>
<div class="r" style="left:903px;top:428px;width:1px;height:320px;background:#e2e2e2;"></div>
<div class="r" style="left:1098px;top:428px;width:1px;height:320px;background:#e2e2e2;"></div>
<div class="r" style="left:1259px;top:428px;width:1px;height:320px;background:#e2e2e2;"></div>
<div class="r" style="left:1454px;top:428px;width:1px;height:320px;background:#e2e2e2;"></div>
<div class="r" style="left:1633px;top:428px;width:1px;height:320px;background:#e2e2e2;"></div>
<div class="r" style="left:1891px;top:428px;width:1px;height:320px;background:#e2e2e2;"></div>
<div class="r" style="left:660px;top:344px;width:250px;height:121px;background:#fff;box-sizing:border-box;border:1px solid #bdbdbd;border-top:none;box-shadow:0 5px 10px rgba(0,0,0,0.2);"></div>
<div class="t" style="left:669.70px;top:355.01px;font-size:11.93px;line-height:11.93px;color:#2b3640;">User Name</div>
<div class="t" style="left:669.70px;top:376.00px;font-size:12.45px;line-height:12.45px;color:#2b3640;">Notification Name</div>
<div class="t" style="left:669.70px;top:398.01px;font-size:12.39px;line-height:12.39px;color:#2b3640;">Notification Recipient</div>
<div class="t" style="left:669.70px;top:420.00px;font-size:12.41px;line-height:12.41px;color:#2b3640;">Notification Type</div>
<div class="t" style="left:669.70px;top:442.01px;font-size:12.52px;line-height:12.52px;color:#2b3640;">Delivery Status</div>
<div class="r" style="left:0px;top:941px;width:1912px;height:21px;background:#e3e3e3;"></div>
<svg class="r" style="left:421px;top:945px" width="12" height="14" viewBox="0 0 12 14"><rect x="1.6" y="1.4" width="9.3" height="11.4" fill="#f5efec" stroke="#4b90d0" stroke-width="1.1"/><rect x="3.1" y="4" width="4.6" height="6.1" fill="#c3c6c8"/><g fill="#5cc8f0"><circle cx="4.3" cy="5.3" r="0.6"/><circle cx="6.3" cy="5.3" r="0.6"/><circle cx="4.3" cy="7.3" r="0.6"/><circle cx="6.3" cy="7.3" r="0.6"/><circle cx="4.3" cy="9.2" r="0.6"/><circle cx="6.3" cy="9.2" r="0.6"/></g><rect x="8.3" y="2" width="1.6" height="10.3" fill="#9cc0c8"/></svg>
<div class="t" style="left:439.80px;top:948.01px;font-size:10.30px;line-height:10.30px;color:#1e1e1e;letter-spacing:0.447px;">Admin Guide</div>
<div class="r" style="left:516px;top:946px;width:1px;height:12px;background:#d2d2d2;"></div>
<svg class="r" style="left:532px;top:944px" width="12" height="14" viewBox="0 0 12 14"><circle cx="6.2" cy="6.2" r="3.1" fill="none" stroke="#55a9c7" stroke-width="1"/><rect x="5.3" y="9" width="1.8" height="3" fill="#55a9c7"/><rect x="5.4" y="11.6" width="1.6" height="1.4" fill="#7cc24a"/><g fill="#7cc24a"><circle cx="6.2" cy="1.3" r="0.7"/><circle cx="2.5" cy="2.6" r="0.7"/><circle cx="9.9" cy="2.6" r="0.7"/><circle cx="1.2" cy="6.2" r="0.7"/><circle cx="11.2" cy="6.2" r="0.7"/><circle cx="2.5" cy="9.6" r="0.7"/><circle cx="9.9" cy="9.6" r="0.7"/></g></svg>
<div class="t" style="left:547.70px;top:948.01px;font-size:10.30px;line-height:10.30px;color:#1e1e1e;letter-spacing:0.272px;">Need Features</div>
<div class="r" style="left:631px;top:946px;width:1px;height:12px;background:#d2d2d2;"></div>
<svg class="r" style="left:644px;top:944px" width="16" height="14" viewBox="0 0 16 14"><g transform="rotate(-18 9.5 7)" stroke="#ee7f5f" stroke-width="1" fill="none"><rect x="5" y="3.8" width="9.5" height="6.5"/><path d="M5 3.8L9.75 7.6L14.5 3.8"/></g><path d="M1 7h3M1.8 9.5h2.6M2.6 12h2.2" stroke="#ee7f5f" stroke-width="1"/></svg>
<div class="t" style="left:662.70px;top:948.01px;font-size:10.30px;line-height:10.30px;color:#1e1e1e;letter-spacing:0.442px;">Report an Issue</div>
<div class="r" style="left:754px;top:946px;width:1px;height:12px;background:#d2d2d2;"></div>
<svg class="r" style="left:769px;top:945px" width="15" height="14" viewBox="0 0 15 14"><rect x="1" y="5" width="7" height="6" fill="none" stroke="#e0585f" stroke-width="1.1"/><rect x="6" y="1" width="8" height="6" fill="#fff" stroke="#e0585f" stroke-width="1.1"/><path d="M3 11v2.5l2-2.5" stroke="#e0585f" stroke-width="1" fill="none"/></svg>
<div class="t" style="left:785.20px;top:948.01px;font-size:10.30px;line-height:10.30px;color:#1e1e1e;letter-spacing:0.327px;">User Forums</div>
<div class="r" style="left:860px;top:946px;width:1px;height:12px;background:#d2d2d2;"></div>
<svg class="r" style="left:875px;top:945px" width="13" height="13" viewBox="0 0 13 13"><path d="M3 10.6A5.3 5.3 0 1 1 6.5 11.8" fill="none" stroke="#6bb344" stroke-width="1.3"/><path d="M4.4 3.8c-0.3 2.9 1.8 5.2 4.7 5.3l0.6-1.2-1.5-0.9-0.7 0.6c-0.9-0.4-1.6-1.2-1.9-2.1l0.6-0.7-0.8-1.4z" fill="#6bb344"/></svg>
<div class="t" style="left:895.00px;top:948.01px;font-size:10.30px;line-height:10.30px;color:#1e1e1e;letter-spacing:0.739px;">Toll free : +1-844-245-1104</div>
<div class="r" style="left:1050px;top:946px;width:1px;height:12px;background:#d2d2d2;"></div>
<svg class="r" style="left:1065px;top:945px" width="13" height="13" viewBox="0 0 13 13"><path d="M3 10.6A5.3 5.3 0 1 1 6.5 11.8" fill="none" stroke="#6bb344" stroke-width="1.3"/><path d="M4.4 3.8c-0.3 2.9 1.8 5.2 4.7 5.3l0.6-1.2-1.5-0.9-0.7 0.6c-0.9-0.4-1.6-1.2-1.9-2.1l0.6-0.7-0.8-1.4z" fill="#6bb344"/></svg>
<div class="t" style="left:1084.60px;top:948.01px;font-size:10.30px;line-height:10.30px;color:#1e1e1e;letter-spacing:0.674px;">Direct Phone : +1-408-916-9890</div>
<div class="r" style="left:1872px;top:926px;width:34px;height:35px;background:#4b575f;border-radius:17px 17px 4px 17px;box-shadow:0 0 4px rgba(0,0,0,0.35);"></div>
<svg class="r" style="left:1880px;top:933px" width="18" height="22" viewBox="0 0 18 22"><path d="M3.2 10.8A5.9 5.9 0 1 1 14.4 10.8" stroke="#3db7f0" stroke-width="1.3" fill="none"/><circle cx="8.8" cy="8" r="4.4" fill="#fff"/><path d="M8.8 12.2v1" stroke="#3db7f0" stroke-width="1.2"/><path d="M1.3 20.5Q1.3 13.2 8.8 13.2Q16.2 13.2 16.2 20.5Q8.8 21.4 1.3 20.5Z" fill="#f5b041"/></svg>
</body></html>
